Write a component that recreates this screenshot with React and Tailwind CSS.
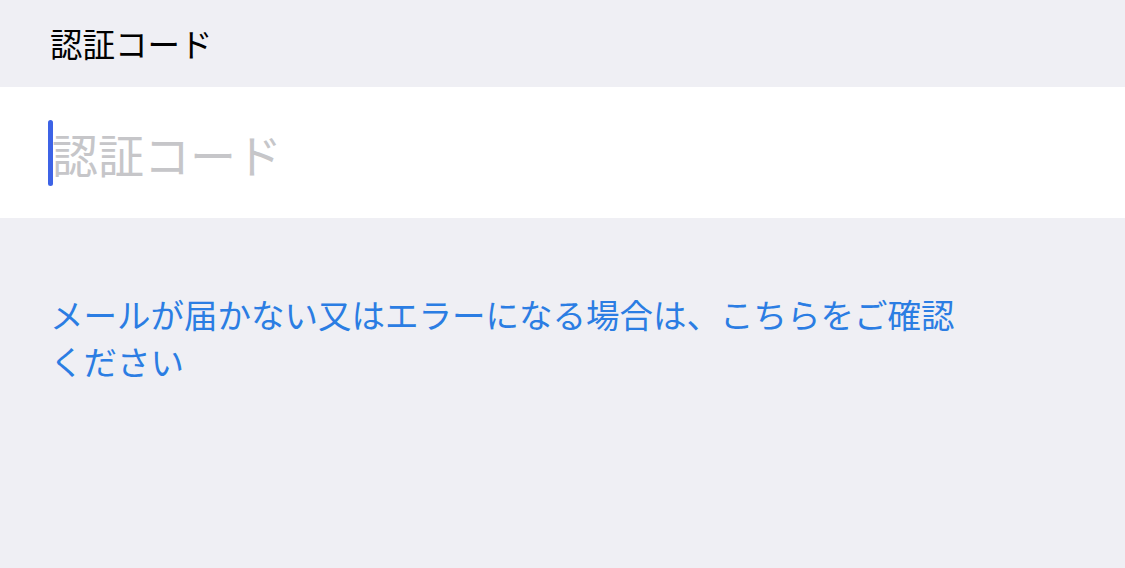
import React from 'react';

const App = () => {
    return (
        <div
            className="w-[1125px] h-[568px] bg-[#efeff4] flex flex-col overflow-hidden"
            style={{ fontFamily: '"Noto Sans CJK JP", "Noto Sans", sans-serif' }}
        >
            <div className="h-[87px] flex items-center px-[50px] text-[32.5px] text-black leading-none">
                認証コード
            </div>
            <div className="h-[131px] bg-white flex items-center pl-[48px]">
                <div className="w-[5px] h-[66px] rounded-full bg-[#3d63e6]" />
                <span className="text-[46px] leading-none text-[#c6c6c9] -ml-[1px]">認証コード</span>
            </div>
            <div className="pt-[72px] px-[50px]">
                <p className="w-[920px] text-[33.5px] leading-[47px] text-[#2b7de3]">
                    メールが届かない又はエラーになる場合は、こちらをご確認ください
                </p>
            </div>
        </div>
    );
};

export default App;
